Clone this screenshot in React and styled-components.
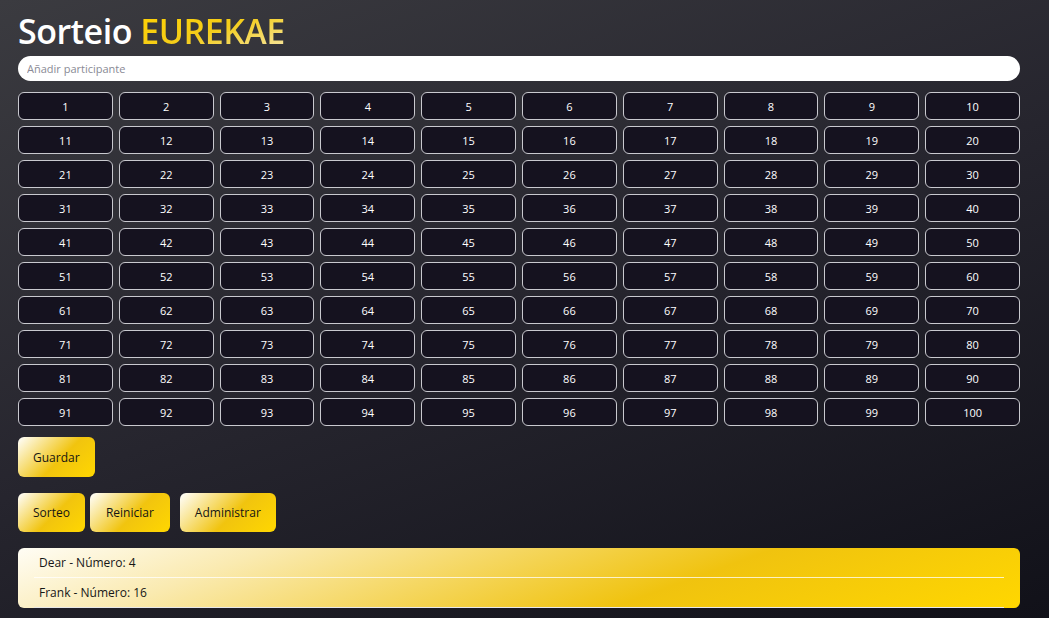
import React from "react";
import styled, { createGlobalStyle } from "styled-components";

const Global = createGlobalStyle`
  html, body { margin: 0; padding: 0; }
  body {
    min-height: 618px;
    background: linear-gradient(160deg, #3b3b40 0%, #26252e 50%, #111119 100%);
    font-family: "Open Sans", "Noto Sans", sans-serif;
  }
`;

const Page = styled.div`
  padding: 11px 18px 10px 18px;
  width: 1002px;
  box-sizing: content-box;
`;

const Title = styled.h1`
  margin: 0 0 5px 0;
  font-size: 34px;
  font-weight: 600;
  color: #ffffff;
  line-height: 40px;
  letter-spacing: -0.5px;
`;

const Brand = styled.span`
  background: linear-gradient(160deg, #ffd200 0%, #f4cd1a 50%, #f6e8b2 100%);
  -webkit-background-clip: text;
  background-clip: text;
  color: transparent;
`;

const Input = styled.input`
  display: block;
  width: 100%;
  box-sizing: border-box;
  height: 25px;
  border: none;
  border-radius: 13px;
  padding: 0 9px;
  font-family: inherit;
  font-size: 11px;
  outline: none;
  background: #fff;
  &::placeholder { color: #8a8a95; }
`;

const Grid = styled.div`
  display: grid;
  grid-template-columns: repeat(10, 1fr);
  gap: 6px 6px;
  margin-top: 11px;
`;

const Cell = styled.button`
  height: 28px;
  box-sizing: border-box;
  background: #15121f;
  border: 1px solid #c9c9cf;
  border-radius: 6px;
  color: #ffffff;
  font-family: inherit;
  font-size: 11px;
  padding: 0;
`;

const Row = styled.div`
  display: flex;
  align-items: center;
  margin-top: ${(p) => p.$mt || 0}px;
`;

const GoldButton = styled.button`
  height: ${(p) => p.$h || 40}px;
  padding: 0 ${(p) => p.$px || 15}px;
  margin-right: ${(p) => p.$mr || 0}px;
  border: none;
  border-radius: 6px;
  background: linear-gradient(135deg, #ffffff 0%, #f1c40f 55%, #ffd700 100%);
  color: #141414;
  font-family: inherit;
  font-size: 12px;
  cursor: pointer;
`;

const List = styled.ul`
  list-style: none;
  margin: 16px 0 0 0;
  padding: 0 16px;
  border-radius: 6px;
  background: linear-gradient(160deg, #fffdf5 0%, #faeab0 22%, #f0c30f 65%, #ffd700 100%);
`;

const Item = styled.li`
  padding: 0 5px;
  height: 29px;
  line-height: 29px;
  border-bottom: 1px solid ${(p) => (p.$last ? "#e8e8e8" : "rgba(255,255,255,0.75)")};
  font-size: 12px;
  color: #161616;
`;

export default function App() {
  const nums = Array.from({ length: 100 }, (_, i) => i + 1);
  return (
    <>
      <Global />
      <Page>
        <Title>
          Sorteio <Brand>EUREKAE</Brand>
        </Title>
        <Input placeholder="Añadir participante" />
        <Grid>
          {nums.map((n) => (
            <Cell key={n}>{n}</Cell>
          ))}
        </Grid>
        <Row $mt={11}>
          <GoldButton $px={15}>Guardar</GoldButton>
        </Row>
        <Row $mt={16}>
          <GoldButton $h={39} $px={15} $mr={5}>Sorteo</GoldButton>
          <GoldButton $h={39} $px={16} $mr={10}>Reiniciar</GoldButton>
          <GoldButton $h={39} $px={15}>Administrar</GoldButton>
        </Row>
        <List>
          <Item>Dear - Número: 4</Item>
          <Item $last>Frank - Número: 16</Item>
        </List>
      </Page>
    </>
  );
}
